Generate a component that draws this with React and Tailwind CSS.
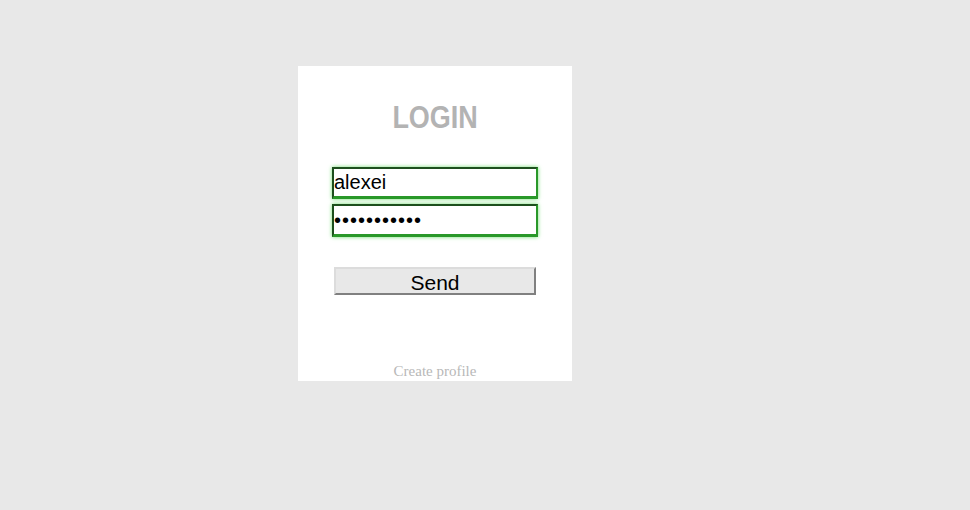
import React, { useState } from 'react';

const App = () => {
  const [user, setUser] = useState('alexei');
  const [pass, setPass] = useState('12345678901');

  return (
    <div className="min-h-screen w-full bg-[#e8e8e8] pt-[66px] pl-[298px]">
      <div className="w-[274px] h-[315px] bg-white flex flex-col items-center">
        <h1 className="mt-[33px] h-[38px] leading-[38px] text-[31px] font-bold text-[#b3b3b3] scale-x-[0.87] font-['Liberation_Sans',Arial,sans-serif]">
          LOGIN
        </h1>

        <form className="mt-[30px] flex flex-col items-center" onSubmit={e => e.preventDefault()}>
          <input
            value={user}
            onChange={e => setUser(e.target.value)}
            className="w-[206px] h-[32px] px-0 border-2 border-b-[3px] border-t-[#1d4f1d] border-l-[#1d4f1d] border-b-[#299829] border-r-[#299829] shadow-[0_0_4px_#6ddc6d] outline-none text-[20px] text-black font-['Liberation_Sans',Arial,sans-serif]"
          />
          <input
            type="password"
            value={pass}
            onChange={e => setPass(e.target.value)}
            className="mt-[5px] w-[206px] h-[33px] px-0 border-2 border-b-[3px] border-t-[#1d4f1d] border-l-[#1d4f1d] border-b-[#299829] border-r-[#299829] shadow-[0_0_4px_#6ddc6d] outline-none text-[20px] text-black tracking-[1px] font-['Liberation_Sans',Arial,sans-serif]"
          />
          <button
            type="submit"
            className="mt-[30px] w-[202px] h-[28px] pt-[2px] bg-[#e8e8e8] border-2 border-t-[#dcdcdc] border-l-[#dcdcdc] border-b-[#808080] border-r-[#808080] text-[21px] leading-none text-black font-['Liberation_Sans',Arial,sans-serif]"
          >
            Send
          </button>
        </form>

        <a href="#" className="mt-[65px] text-[15px] text-[#b8b8b8] font-['Liberation_Serif','Times_New_Roman',serif]">
          Create profile
        </a>
      </div>
    </div>
  );
};

export default App;
